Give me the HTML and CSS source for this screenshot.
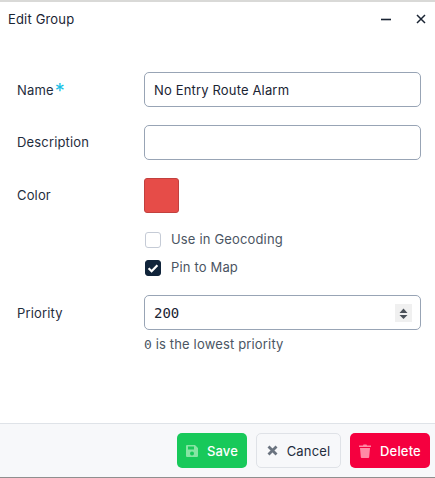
FILE: index.html
```html
<!DOCTYPE html>
<html lang="en">
<head>
<meta charset="utf-8">
<title>Edit Group</title>
<link rel="stylesheet" href="styles.css">
</head>
<body>
<div class="dialog">
  <div class="topstrip"></div>
  <header class="titlebar">
    <h1 class="title">Edit Group</h1>
    <div class="window-actions">
      <svg class="win-icon" viewBox="0 0 12 12" width="12" height="12"><path d="M1 6.500h10" stroke="#1a2433" stroke-width="1.6"/></svg>
      <svg class="win-icon" viewBox="0 0 12 12" width="12" height="12"><path d="M2 2l8 8M10 2l-8 8" stroke="#1a2433" stroke-width="1.5"/></svg>
    </div>
  </header>
  <main class="form">
    <div class="row row-name">
      <label class="label">Name<span class="req">*</span></label>
      <div class="input text">No Entry Route Alarm</div>
    </div>
    <div class="row row-desc">
      <label class="label">Description</label>
      <div class="input"></div>
    </div>
    <div class="row row-color">
      <label class="label">Color</label>
      <div class="swatch"></div>
    </div>
    <div class="checks">
      <div class="check"><span class="box"></span><span class="check-text">Use in Geocoding</span></div>
      <div class="check"><span class="box on"><svg viewBox="0 0 16 16" width="16" height="16"><path d="M3.600 8.200l3 3 5.800-6" fill="none" stroke="#fff" stroke-width="2.200"/></svg></span><span class="check-text">Pin to Map</span></div>
    </div>
    <div class="row row-priority">
      <label class="label">Priority</label>
      <div class="input text mono">200
        <span class="spinner"><svg viewBox="0 0 17 17" width="17" height="17"><path d="M8.500 3.500l4 4.500h-8zM8.500 14l-4-4h8z" fill="#4a5058"/></svg></span>
      </div>
    </div>
    <p class="hint"><span class="mono">0</span> is the lowest priority</p>
  </main>
  <footer class="footer">
    <button class="btn save"><svg viewBox="0 0 12 12" width="12" height="12"><path d="M1 0h8l3 3v8a1 1 0 0 1-1 1H1a1 1 0 0 1-1-1V1a1 1 0 0 1 1-1zm1 1.500v3h6v-3zM6 6.500a2 2 0 1 0 0 4 2 2 0 0 0 0-4z" fill="#86e5a4" fill-rule="evenodd"/></svg>Save</button>
    <button class="btn cancel"><svg viewBox="0 0 11 11" width="11" height="11"><path d="M1.500 1.500l8 8M9.500 1.500l-8 8" stroke="#6b7480" stroke-width="2.800"/></svg>Cancel</button>
    <button class="btn delete"><svg viewBox="0 0 12 14" width="12" height="14"><path d="M0 1.500h4l.5-1h3l.5 1h4V3H0zM1 4h10l-.8 9a1 1 0 0 1-1 1H2.800a1 1 0 0 1-1-1z" fill="#ff8aa5"/></svg>Delete</button>
  </footer>
  <div class="bottomstrip"></div>
</div>
</body>
</html>
```
FILE: styles.css
```css
* { box-sizing: border-box; }
html, body { margin: 0; height: 100%; }
body { font-family: Inter, "Liberation Sans", sans-serif; font-size: 13px; letter-spacing: .16px; color: #1f2d3d; background: #fff; }
.dialog { width: 435px; height: 478px; display: flex; flex-direction: column; overflow: hidden; }
.topstrip { height: 2px; background: #d9d9d7; flex: none; }
.titlebar { height: 33px; flex: none; display: flex; align-items: center; justify-content: space-between; padding: 0 8px; }
.title { margin: 0; font-size: 13px; font-weight: 400; color: #1a2433; }
.window-actions { display: flex; gap: 23px; }
.win-icon { display: block; }
.form { flex: 1; padding: 37px 14px 0 17px; }
.row { display: flex; align-items: center; }
.label { width: 127px; flex: none; line-height: 18px; padding-bottom: 2px; }
.row-name .label, .row-priority .label { padding-bottom: 0; }
.req { color: #19bfe6; font-size: 20px; line-height: 10px; vertical-align: -3px; margin-left: 1px; }
.input { width: 277px; height: 35px; border: 1px solid #98a4b5; border-radius: 5px; background: #fff; display: flex; align-items: center; padding: 0 9px; position: relative; color: #1a2433; }
.row-desc { margin-top: 18px; }
.row-color { margin-top: 18px; }
.swatch { width: 35px; height: 35px; background: #e64c48; border: 1px solid #c2403e; border-radius: 3px; }
.checks { margin: 19px 0 0 128px; display: flex; flex-direction: column; gap: 12px; }
.check { display: flex; align-items: center; gap: 10px; height: 16px; color: #4b5563; }
.check-text { padding-bottom: 2px; }
.box { width: 16px; height: 16px; border: 1px solid #c5cbd6; border-radius: 3px; background: #fff; display: block; }
.box.on { background: #10243a; border-color: #10243a; }
.box.on svg { display: block; margin: -1px; }
.row-priority { margin-top: 19px; }
.mono { font-family: "DejaVu Sans Mono", monospace; font-size: 14px; letter-spacing: 0; }
.spinner { position: absolute; right: 8px; top: 8px; width: 17px; height: 18px; background: #f0f0f0; display: flex; align-items: center; }
.hint { margin: 6px 0 0 127px; color: #4b5563; line-height: 16px; }
.hint .mono { font-size: 13px; }
.footer { height: 54px; flex: none; background: #f7f8fa; border-top: 1px solid #dfe3e8; display: flex; justify-content: flex-end; align-items: center; gap: 9px; padding: 0 5px 0 0; }
.btn { height: 35px; border-radius: 5px; border: 1px solid transparent; font: 500 13px Inter, "Liberation Sans", sans-serif; letter-spacing: .16px; display: flex; align-items: center; justify-content: center; gap: 9px; padding: 0; }
.save { width: 70px; background: #18c95a; color: #fff; }
.cancel { width: 85px; background: #f7f8fa; border-color: #dfe2e7; color: #1f2d3d; font-weight: 400; }
.delete { width: 80px; background: #f5003f; color: #fff; }
.bottomstrip { height: 1px; background: #8f8f8f; flex: none; }
```
